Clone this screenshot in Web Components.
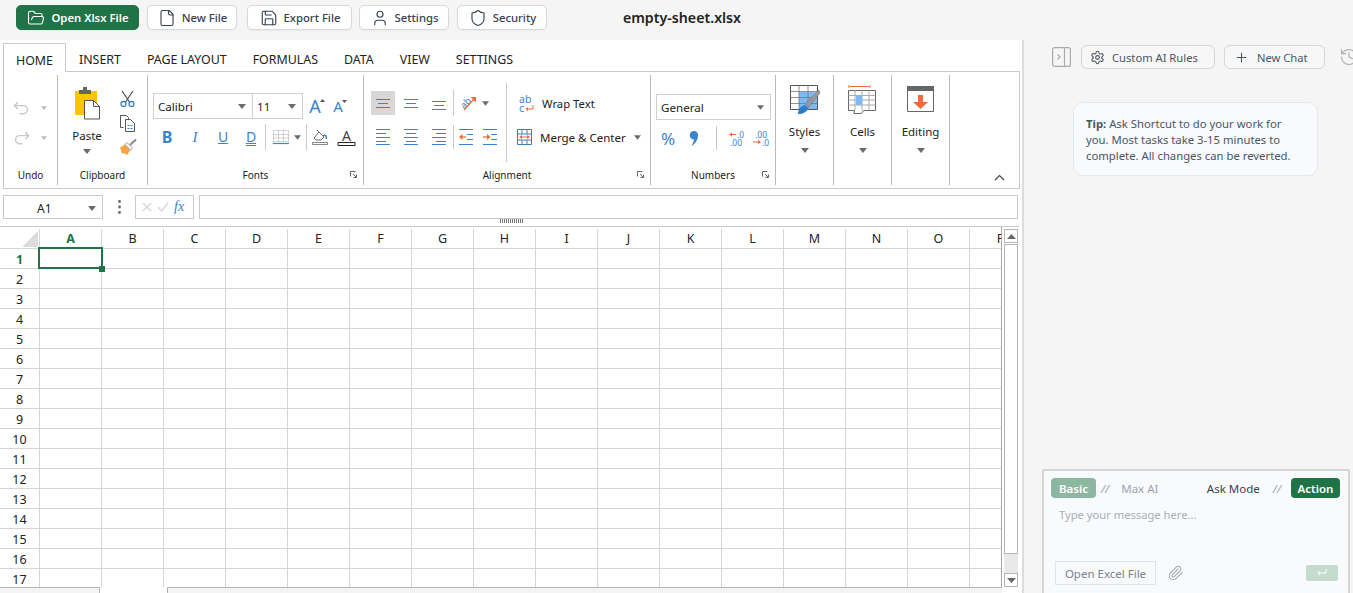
<!DOCTYPE html>
<html lang="en"><head><meta charset="utf-8"><title>empty-sheet.xlsx</title>
<style>
html,body{margin:0;padding:0;height:100%;overflow:hidden;background:#f5f5f5}
body{font-family:"Noto Sans","Open Sans","Liberation Sans",sans-serif;color:#222}
</style></head><body>
<app-shell></app-shell>
<script>
const lucide={
 folder:'<path d="m6 14 1.5-2.9A2 2 0 0 1 9.24 10H20a2 2 0 0 1 1.94 2.5l-1.54 6a2 2 0 0 1-1.95 1.5H4a2 2 0 0 1-2-2V5a2 2 0 0 1 2-2h3.9a2 2 0 0 1 1.69.9l.81 1.2a2 2 0 0 0 1.67.9H18a2 2 0 0 1 2 2v2"/>',
 file:'<path d="M15 2H6a2 2 0 0 0-2 2v16a2 2 0 0 0 2 2h12a2 2 0 0 0 2-2V7Z"/><path d="M14 2v4a2 2 0 0 0 2 2h4"/>',
 save:'<path d="M15.2 3a2 2 0 0 1 1.4.6l3.8 3.8a2 2 0 0 1 .6 1.4V19a2 2 0 0 1-2 2H5a2 2 0 0 1-2-2V5a2 2 0 0 1 2-2z"/><path d="M17 21v-7a1 1 0 0 0-1-1H8a1 1 0 0 0-1 1v7"/><path d="M7 3v4a1 1 0 0 0 1 1h7"/>',
 user:'<path d="M19 21v-2a4 4 0 0 0-4-4H9a4 4 0 0 0-4 4v2"/><circle cx="12" cy="7" r="4"/>',
 shield:'<path d="M20 13c0 5-3.5 7.5-7.66 8.95a1 1 0 0 1-.67-.01C7.5 20.5 4 18 4 13V6a1 1 0 0 1 1-1c2 0 4.5-1.2 6.24-2.72a1.17 1.17 0 0 1 1.52 0C14.51 3.81 17 5 19 5a1 1 0 0 1 1 1z"/>',
 gear:'<path d="M12.22 2h-.44a2 2 0 0 0-2 2v.18a2 2 0 0 1-1 1.73l-.43.25a2 2 0 0 1-2 0l-.15-.08a2 2 0 0 0-2.73.73l-.22.38a2 2 0 0 0 .73 2.73l.15.1a2 2 0 0 1 1 1.72v.51a2 2 0 0 1-1 1.74l-.15.09a2 2 0 0 0-.73 2.73l.22.38a2 2 0 0 0 2.73.73l.15-.08a2 2 0 0 1 2 0l.43.25a2 2 0 0 1 1 1.73V20a2 2 0 0 0 2 2h.44a2 2 0 0 0 2-2v-.18a2 2 0 0 1 1-1.73l.43-.25a2 2 0 0 1 2 0l.15.08a2 2 0 0 0 2.73-.73l.22-.39a2 2 0 0 0-.73-2.73l-.15-.08a2 2 0 0 1-1-1.74v-.5a2 2 0 0 1 1-1.74l.15-.09a2 2 0 0 0 .73-2.73l-.22-.38a2 2 0 0 0-2.73-.73l-.15.08a2 2 0 0 1-2 0l-.43-.25a2 2 0 0 1-1-1.73V4a2 2 0 0 0-2-2z"/><circle cx="12" cy="12" r="3"/>',
 plus:'<path d="M5 12h14M12 5v14"/>',
 history:'<path d="M3 12a9 9 0 1 0 9-9 9.75 9.75 0 0 0-6.74 2.74L3 8"/><path d="M3 3v5h5"/><path d="M12 7v5l4 2"/>',
 clip:'<path d="m21.44 11.05-9.19 9.19a6 6 0 0 1-8.49-8.49l8.57-8.57A4 4 0 1 1 18 8.84l-8.59 8.57a2 2 0 0 1-2.83-2.83l8.49-8.48"/>'
};
const lu=(n,s,c,w=2)=>`<svg width="${s}" height="${s}" viewBox="0 0 24 24" fill="none" stroke="${c}" stroke-width="${w}" stroke-linecap="round" stroke-linejoin="round">${lucide[n]}</svg>`;
class Base extends HTMLElement{
 constructor(){super();this.attachShadow({mode:'open'}).innerHTML=this.html();}
 html(){return ''}
}
const def=(n,c)=>customElements.define(n,c);

def('top-btn',class extends Base{
 html(){const p=this.hasAttribute('primary');const c=p?'#fff':'#374151';
  return `<style>:host{display:inline-flex;align-items:center;box-sizing:border-box;height:25px;border-radius:5px;flex:none;
   background:${p?'#1f7347':'#fff'};border:1px solid ${p?'#1f7347':'#d6d8df'};color:${p?'#fff':'#374151'};padding-left:1px;
   font:${p?600:500} 11.3px "Noto Sans",sans-serif;white-space:nowrap;justify-content:center;gap:6px;box-shadow:0 1px 1px rgba(0,0,0,.04)}
   svg{display:block;flex:none}</style>${lu(this.getAttribute('icon'),18,c,1.5)}<slot></slot>`}
});
def('top-bar',class extends Base{
 html(){return `<style>:host{display:flex;align-items:center;height:40px;box-sizing:border-box;padding:0 0 5px 16px;background:#f5f5f5}
  h1{margin:0 0 0 45px;width:180px;flex:none;text-align:center;font:600 14.2px "Noto Sans",sans-serif;color:#222;white-space:nowrap}</style>
  <top-btn primary icon="folder" style="width:123px">Open Xlsx File</top-btn>
  <top-btn icon="file" style="width:90px;margin-left:8px">New File</top-btn>
  <top-btn icon="save" style="width:105px;margin-left:10px">Export File</top-btn>
  <top-btn icon="user" style="width:90px;margin-left:7px">Settings</top-btn>
  <top-btn icon="shield" style="width:90px;margin-left:8px">Security</top-btn>
  <h1>empty-sheet.xlsx</h1>`}
});
def('ribbon-tabs',class extends Base{
 html(){const t=['INSERT','PAGE LAYOUT','FORMULAS','DATA','VIEW','SETTINGS'];
  return `<style>:host{display:flex;height:29px;margin:3px 2px 0 3px;box-sizing:border-box;border-bottom:1px solid #c9c9c9;font:12.4px "Noto Sans",sans-serif;color:#222}
  span{padding:0 13px;line-height:34px;white-space:nowrap}
  .on{background:#fff;border:1px solid #c9c9c9;border-bottom:0;height:29px;box-sizing:border-box;padding:0 12px;line-height:33px;width:63px;text-align:center}</style>
  <span class="on">HOME</span>${t.map(x=>`<span>${x}</span>`).join('')}`}
});
def('ribbon-group',class extends Base{
 html(){const l=this.getAttribute('label');const d=this.hasAttribute('launcher');
  return `<style>:host{display:grid;grid-template-rows:90px 20px;box-sizing:border-box;height:110px;margin-top:3px;border-right:1px solid #b9b9b9;flex:none;font:12px "Noto Sans",sans-serif;color:#222}
  .b{min-width:0}
  .l{display:flex;align-items:center;justify-content:center;position:relative;font-size:10px;color:#222}
  .d{position:absolute;right:6px;top:6px;width:7px;height:7px}</style>
  <div class="b"><slot></slot></div><div class="l">${l||''}${d?`<svg class="d" viewBox="0 0 7 7" fill="none" stroke="#666"><path d="M.5 5.5v-5h5"/><path d="M3 3l3 3M6.500 3.500v3h-3"/></svg>`:''}</div>`}
});
const caret=`<svg width="8" height="5" viewBox="0 0 8 5"><path d="M0 0h8L4 5z" fill="#6b6b6b"/></svg>`;
const B='#3a83cf',O='#f4683a',G='#666';
const alignIcon=(rows,h=16)=>`<svg width="14" height="${h}" viewBox="0 0 14 ${h}" stroke="${B}" stroke-width="1">${rows.map(r=>`<path d="M${r[0]} ${r[2]+.5}H${r[1]}"/>`).join('')}</svg>`;
def('ribbon-bar',class extends Base{
 html(){return `<style>
 :host{display:flex;height:117px;box-sizing:border-box;margin:0 2px 0 3px;border:solid #c9c9c9;border-width:0 1px 1px 1px;background:#fff;font:12px "Noto Sans",sans-serif;color:#222}
 svg{display:block;flex:none;overflow:visible}
 .rows{display:flex;flex-direction:column}
 .r{display:flex;align-items:center}
 .c{display:flex;align-items:center;justify-content:center;flex:none}
 .sep{width:1px;background:#c9c9c9;flex:none}
 .sel{display:flex;align-items:center;justify-content:space-between;box-sizing:border-box;border:1px solid #cfcfcf;height:26px;padding:0 6px 0 4px;font-size:11.6px;flex:none}
 .act{background:#d8d8d8}
 .big{display:flex;flex-direction:column;align-items:center}
 .big span{line-height:16px;margin-top:8px;font-size:11.5px}
 .big svg.k{margin-top:8px}
 .t{font-size:11.3px;white-space:nowrap}
 .blue{color:${B};font-size:15px;line-height:1}
 .last{flex:1;display:flex;justify-content:flex-end;align-items:flex-end;padding:0 14px 7px 0}
 </style>
 <ribbon-group label="Undo" style="width:54px">
  <div class="rows" style="padding:18px 0 0 9px">
   <div class="r" style="height:30px;gap:11px"><svg width="17" height="14" viewBox="0 0 18 14" fill="none" stroke="#c6c6c6" stroke-width="1.500"><path d="M5 1 1.500 4.500 5 8"/><path d="M2 4.500h9a4 4 0 0 1 0 8.500H7"/></svg><svg width="6" height="4" viewBox="0 0 8 5"><path d="M0 0h8L4 5z" fill="#bbb"/></svg></div>
   <div class="r" style="height:30px;gap:11px"><svg width="17" height="14" viewBox="0 0 18 14" fill="none" stroke="#c6c6c6" stroke-width="1.500"><path d="M13 1l3.500 3.500L13 8"/><path d="M16 4.500H7a4 4 0 0 0 0 8.500h3"/></svg><svg width="6" height="4" viewBox="0 0 8 5"><path d="M0 0h8L4 5z" fill="#bbb"/></svg></div>
  </div>
 </ribbon-group>
 <ribbon-group label="Clipboard" style="width:90px">
  <div class="r" style="align-items:flex-start;padding-top:12px">
   <div class="big" style="width:58px">
    <svg width="28" height="33" viewBox="0 0 28 33"><path d="M2 4h22v24H2z" fill="#fdc400"/><path d="M6 3h4V0h4v3h4v4H6z" fill="#666"/><path d="M11.500 13.500h9l6 6v12.500h-15z" fill="#fff" stroke="#555"/><path d="M20.500 13.500v6h6" fill="none" stroke="#555"/></svg>
    <span>Paste</span><svg width="8" height="5" viewBox="0 0 8 5" style="margin-top:5px"><path d="M0 0h8L4 5z" fill="#6b6b6b"/></svg>
   </div>
   <div class="rows" style="align-items:center;width:24px;margin-left:-1px">
    <div class="c" style="height:24px;width:24px"><svg width="15" height="16" viewBox="0 0 15 16" fill="none"><path d="M2 0l7.500 11M13 0 5.500 11" stroke="#555" stroke-width="1.300"/><circle cx="3.500" cy="13" r="2.500" stroke="${B}" stroke-width="1.300"/><circle cx="11.500" cy="13" r="2.500" stroke="${B}" stroke-width="1.300"/></svg></div>
    <div class="c" style="height:24px;width:24px"><svg width="15" height="17" viewBox="0 0 15 17" fill="none" stroke="#555"><path d="M3.500 12.500h-3V.5h6l2 2v2"/><path d="M5.500 4.500h5l4 4v8h-9z" fill="#fff"/><path d="M7.500 10.500h5M7.500 13.500h5" stroke="${B}" stroke-dasharray="2 1"/></svg></div>
    <div class="c" style="height:24px;width:24px;margin-left:3px"><svg width="17" height="16" viewBox="0 0 17 16"><path d="M0 8.500 5 5.500l5.500 5.500-3.500 5c-1.500-.5-2.500-1.300-3-2l-1.500 1C1.500 13.500 1 11 0 8.500z" fill="#f8a644"/><path d="M5 5.500l2-2 5.500 5.500-2 2z" fill="#fff" stroke="#888" stroke-width=".8"/><path d="M10 6l6-5.500" stroke="#888" stroke-width="2"/></svg></div>
   </div>
  </div>
 </ribbon-group>
 <ribbon-group label="Fonts" launcher style="width:216px">
  <div class="rows" style="padding:18px 0 0 5px">
   <div class="r" style="height:26px">
    <div class="sel" style="width:100px"><span>Calibri</span>${caret}</div>
    <div class="sel" style="width:51px;margin-left:-1px"><span>11</span>${caret}</div>
    <div class="c" style="width:16px;margin-left:4px"><span class="blue" style="font-size:18px;position:relative">A<svg style="position:absolute;right:-4px;top:2px" width="5" height="3" viewBox="0 0 5 3"><path d="M0 3 2.500 0 5 3z" fill="#555"/></svg></span></div>
    <div class="c" style="width:16px;margin-left:7px"><span class="blue" style="font-size:15px;position:relative">A<svg style="position:absolute;right:-4px;top:1px" width="5" height="3" viewBox="0 0 5 3"><path d="M0 0 2.500 3 5 0z" fill="#555"/></svg></span></div>
   </div>
   <div class="r" style="height:26px;margin-top:5px">
    <div class="c" style="width:28px"><span class="blue" style="font-weight:700;font-size:16px">B</span></div>
    <div class="c" style="width:28px"><span class="blue" style="font-style:italic;font-size:15px;font-family:'Liberation Serif',serif">I</span></div>
    <div class="c" style="width:28px"><span class="blue" style="text-decoration:underline;font-size:14px">U</span></div>
    <div class="c" style="width:28px"><span class="blue" style="text-decoration:underline double;font-size:14px">D</span></div>
    <div class="sep" style="height:26px"></div>
    <div class="c" style="margin-left:7px"><svg width="16" height="15" viewBox="0 0 16 15" fill="none"><path d="M.5.500h15v11H.5zM5.500.500v11M10.500.500v11M.5 4.500h15M.5 8h15" stroke="#aaa" stroke-dasharray="1 1"/><path d="M0 13.500h16" stroke="${B}" stroke-width="1.200"/></svg></div>
    <div class="c" style="margin-left:5px">${caret.replace('width="8"','width="7"')}</div>
    <div class="sep" style="height:26px;margin-left:5px"></div>
    <div class="c" style="margin-left:5px"><svg width="17" height="17" viewBox="0 0 17 17" fill="none"><path d="M2 9l5-6 5 5-3 3H4z" stroke="#666"/><path d="M5 1l3 3" stroke="#666"/><path d="M11 7c3-2 4 1 3 3" stroke="${B}" stroke-width="1.500"/><path d="M.5 13.500h15v2H.5z" stroke="#888" fill="#fff"/></svg></div>
    <div class="c" style="margin-left:9px;width:17px;flex-direction:column"><span style="font-size:14px;line-height:13px;color:#444">A</span><svg width="17" height="4" viewBox="0 0 17 4"><path d="M0 .5h17v3H0z" fill="#fff" stroke="#222"/></svg></div>
   </div>
  </div>
 </ribbon-group>
 <ribbon-group label="Alignment" launcher style="width:287px">
  <div class="r" style="align-items:flex-start;height:90px">
   <div class="rows" style="width:142px;flex:none;padding:16px 0 0 5px;box-sizing:border-box">
    <div class="r" style="height:24px">
     <div class="c" style="width:28px;height:24px"><div class="c act" style="width:24px;height:24px">${alignIcon([[0,14,0],[2,12,4],[0,14,8]],9)}</div></div>
     <div class="c" style="width:28px;height:24px">${alignIcon([[0,14,0],[2,12,4],[0,14,8]],9)}</div>
     <div class="c" style="width:28px;height:24px;padding-top:4px;box-sizing:border-box">${alignIcon([[0,14,0],[2,12,4],[0,14,8]],9)}</div>
     <div class="sep" style="height:26px"></div>
     <div class="c" style="margin-left:6px"><svg width="16" height="16" viewBox="0 0 16 16"><text x="0" y="11" font-size="9.500" fill="${B}" font-family="Noto Sans" transform="rotate(-45 6 8)">ab</text><path d="M4 15 14 4" stroke="${O}" stroke-width="1.200"/><path d="M10.500 2H16v5.500z" fill="${O}"/></svg></div>
     <div class="c" style="margin-left:6px">${caret.replace('width="8"','width="7"')}</div>
    </div>
    <div class="r" style="height:24px;margin-top:10px">
     <div class="c" style="width:28px">${alignIcon([[0,14,0],[0,10,4],[0,14,8],[0,10,12],[0,14,15]])}</div>
     <div class="c" style="width:28px">${alignIcon([[0,14,0],[2,12,4],[0,14,8],[2,12,12],[0,14,15]])}</div>
     <div class="c" style="width:28px">${alignIcon([[0,14,0],[4,14,4],[0,14,8],[4,14,12],[0,14,15]])}</div>
     <div class="sep" style="height:24px"></div>
     <div class="c" style="margin-left:5px"><svg width="15" height="16" viewBox="0 0 15 16" stroke="${B}"><path d="M0 .5h14M8 5.500h6M8 10.500h6M0 15.500h14"/><path d="M3 8h4" stroke="#f9a081" stroke-width="2"/><path d="M3.500 5 0 8l3.500 3z" fill="${O}" stroke="none"/></svg></div>
     <div class="c" style="margin-left:9px"><svg width="15" height="16" viewBox="0 0 15 16" stroke="${B}"><path d="M0 .5h14M8 5.500h6M8 10.500h6M0 15.500h14"/><path d="M0 8h4" stroke="#f9a081" stroke-width="2"/><path d="M4 5l3.500 3L4 11z" fill="${O}" stroke="none"/></svg></div>
    </div>
   </div>
   <div class="sep" style="height:79px;margin-top:8px"></div>
   <div class="rows" style="padding:16px 0 0 10px;box-sizing:border-box">
    <div class="r" style="height:24px;padding-left:2px;gap:8px"><svg width="15" height="17" viewBox="0 0 15 17"><text x="0" y="8" font-size="10.500" fill="${B}" font-family="Noto Sans">ab</text><text x="0" y="16.500" font-size="11" fill="${B}" font-family="Noto Sans">c</text><path d="M14 10v4H8" fill="none" stroke="${O}"/><path d="M9 12l-2.500 2L9 16z" fill="${O}"/></svg><span class="t">Wrap Text</span></div>
    <div class="r" style="height:24px;margin-top:10px;gap:8px"><svg width="15" height="16" viewBox="0 0 15 16" fill="none" stroke="#3a7cc0"><path d="M.5.500h14v15H.5zM.5 5h14M.5 11h14M5 .5V5M10 .5V5M5 11v4.500M10 11v4.500"/><path d="M3 8h9" stroke="${O}"/><path d="M5 6 2 8l3 2zM10 6l3 2-3 2z" fill="${O}" stroke="none"/></svg><span class="t" style="font-size:11.5px">Merge &amp; Center</span><span>${caret.replace('width="8"','width="7"')}</span></div>
   </div>
  </div>
 </ribbon-group>
 <ribbon-group label="Numbers" launcher style="width:125px">
  <div class="rows" style="padding:19px 0 0 5px">
   <div class="sel" style="width:115px;height:26px"><span>General</span>${caret.replace('width="8"','width="7"')}</div>
   <div class="r" style="height:26px;margin-top:5px">
    <div class="c" style="width:24px"><span class="blue" style="font-size:17px">%</span></div>
    <div class="c" style="width:10px;margin-left:9px"><svg width="8" height="15" viewBox="0 0 8 15"><path d="M4 0a4 4 0 0 1 4 4.500C8 9 5 13 1.500 15 3 12 4 10 4 8.500A4 4 0 0 1 4 0z" fill="${B}"/></svg></div>
    <div class="sep" style="height:24px;margin-left:17px"></div>
    <div class="c" style="margin-left:12px"><svg width="17" height="15" viewBox="0 0 17 15"><text x="8" y="6.500" font-size="8.500" fill="${B}" font-family="Noto Sans">.0</text><text x="1" y="14.500" font-size="8.500" fill="${B}" font-family="Noto Sans">.00</text><path d="M7 3.500H1" stroke="${O}"/><path d="M3 1.500 0 3.500l3 2z" fill="${O}"/></svg></div>
    <div class="c" style="margin-left:7px"><svg width="17" height="15" viewBox="0 0 17 15"><text x="2" y="6.500" font-size="8.500" fill="${B}" font-family="Noto Sans">.00</text><text x="9" y="14.500" font-size="8.500" fill="${B}" font-family="Noto Sans">.0</text><path d="M0 11h6" stroke="${O}"/><path d="M5 9l3 2-3 2z" fill="${O}"/></svg></div>
   </div>
  </div>
 </ribbon-group>
 <ribbon-group style="width:58px"><div class="big" style="padding:10px 0 0 0">
   <svg width="30" height="30" viewBox="0 0 30 30"><path d="M.5.500h27v24H.5z" fill="#fff" stroke="#555"/><path d="M9 7h18v17H9z" fill="#7db9f5"/><path d="M.5 6.500h27M.5 12.500h27M.5 18.500h27M9 .5v24M18 .5v24" stroke="#777" fill="none" stroke-width=".8"/><path d="M29 5 15 19l4 3L30 8z" fill="#999" stroke="#777" stroke-width=".6"/><path d="M8 29c0-5 3-8 7-9l3 3c-1 4-5 6-10 6z" fill="#2d7cc9"/></svg>
   <span style="margin-top:9px">Styles</span>${caret.replace('<svg','<svg class="k"')}
 </div></ribbon-group>
 <ribbon-group style="width:58px"><div class="big" style="padding:10px 0 0 0">
   <svg width="30" height="30" viewBox="0 0 30 30" fill="none"><path d="M1 0v3M22 0v3M2 1.500h19" stroke="${O}"/><path d="M.5 5.500h27v20h-12l-2 3H6l.5-3h-6z" fill="#fff" stroke="#666"/><path d="M.5 10.500h27M.5 15h27M.5 20h27M7 5.500v20M14 5.500v20M21 5.500v20" stroke="#aaa"/><path d="M8 10h6v10H8z" fill="#7db9f5"/></svg>
   <span style="margin-top:9px">Cells</span>${caret.replace('<svg','<svg class="k"')}
 </div></ribbon-group>
 <ribbon-group style="width:58px"><div class="big" style="padding:11px 0 0 0">
   <svg width="27" height="29" viewBox="0 0 27 29"><path d="M.5.500h26v25H.5z" fill="#fff" stroke="#666"/><path d="M0 0h27v5H0z" fill="#666"/><path d="M11 9h5v7h5l-7.500 7L6 16h5z" fill="${O}"/></svg>
   <span style="margin-top:9px">Editing</span>${caret.replace('<svg','<svg class="k"')}
 </div></ribbon-group>
 <div class="last"><svg width="11" height="7" viewBox="0 0 11 7" fill="none" stroke="#444" stroke-width="1.200"><path d="M1 6l4.500-4.500L10 6"/></svg></div>`}
});
def('formula-bar',class extends Base{
 html(){return `<style>:host{display:flex;height:24px;margin:6px 4px 0 3px;font:12px "Noto Sans",sans-serif;color:#222}
 .b{box-sizing:border-box;border:1px solid #c9c9c9;height:24px;display:flex;align-items:center;flex:none}
 svg{display:block}
 .fx{font:italic 14px "Liberation Serif",serif;color:${B}}</style>
 <div class="b" style="width:100px;padding:2px 6px 0 33px;justify-content:space-between"><span>A1</span>${caret}</div>
 <div style="width:32px;display:flex;align-items:center;justify-content:center;flex:none"><svg width="3" height="14" viewBox="0 0 3 14" fill="#666"><circle cx="1.500" cy="1.500" r="1.400"/><circle cx="1.500" cy="7" r="1.400"/><circle cx="1.500" cy="12.500" r="1.400"/></svg></div>
 <div class="b" style="width:59px;gap:5px;padding-left:6px"><svg width="10" height="10" viewBox="0 0 10 10" stroke="#d4d4d4" stroke-width="1.300"><path d="M1 1l8 8M9 1 1 9"/></svg><svg width="12" height="10" viewBox="0 0 12 10" fill="none" stroke="#d4d4d4" stroke-width="1.300"><path d="M1 5l3.500 4L11 1"/></svg><span class="fx">fx</span></div>
 <div class="b" style="flex:1;margin-left:5px"></div>`}
});
def('sheet-grid',class extends Base{
 html(){
  const cols='ABCDEFGHIJKLMNOP'.split('');
  let h=`<div class="h corner"><svg width="16" height="16" viewBox="0 0 16 16"><path d="M16 0v16H0z" fill="#dcdcdc"/></svg></div>`;
  cols.forEach((c,i)=>h+=`<div class="h col${i==0?' on':''}">${c}</div>`);
  for(let r=1;r<=17;r++){
   h+=`<div class="h rowh${r==1?' on':''}">${r}</div>`;
   cols.forEach((c,i)=>h+=`<div class="cell">${r==1&&i==0?'<i class="sel"></i><i class="hd"></i>':''}</div>`);
  }
  return `<style>:host{display:block;flex:1;min-width:0;overflow:hidden;background:#fff;font:12.5px "Noto Sans",sans-serif;color:#222}
  .g{display:grid;grid-template-columns:40px repeat(16,62px);grid-auto-rows:20px;padding-top:2px;width:1032px}
  .g>div{box-sizing:border-box;border-right:1px solid #d6d6d6;border-bottom:1px solid #d6d6d6}
  .h{display:flex;align-items:center;justify-content:center;color:#222}
  .corner{justify-content:flex-end;padding-right:1px;align-items:flex-end;padding-bottom:1px}
  .on{color:#1f7347;font-weight:700}
  .rowh{padding-top:2px}
  .cell{position:relative}
  .sel{position:absolute;left:-2px;top:-2px;width:65px;height:22px;box-sizing:border-box;border:2px solid #1f7347;z-index:1}
  .hd{position:absolute;right:-4px;bottom:-4px;width:6px;height:6px;background:#1f7347;z-index:2}
  </style><div class="g">${h}</div>`}
});
def('sheet-scroll',class extends Base{
 html(){return `<style>:host{display:flex;flex-direction:column;width:18px;box-sizing:border-box;flex:none;padding:2px 1px 0 2px;background:#fff;border-left:1px solid #a8a8a8}
 .b{height:14px;box-sizing:border-box;border:1px solid #b5b5b5;background:#fff;display:flex;align-items:center;justify-content:center;flex:none}
 .th{height:310px;box-sizing:border-box;border:1px solid #b5b5b5;background:#fff;flex:none;margin-top:1px}
 .tr{flex:1;background:#e9e9e9}</style>
 <div class="b"><svg width="9" height="5" viewBox="0 0 9 5"><path d="M0 5h9L4.500 0z" fill="#666"/></svg></div>
 <div class="th"></div><div class="tr"></div>
 <div class="b"><svg width="9" height="5" viewBox="0 0 9 5"><path d="M0 0h9L4.500 5z" fill="#666"/></svg></div>`}
});
def('sheet-foot',class extends Base{
 html(){return `<style>:host{display:flex;height:6px;box-sizing:border-box;background:#fff}
 .a{background:#f4f4f4;border-top:1px solid #b5b5b5;box-sizing:border-box;height:6px}</style>
 <div class="a" style="width:100px;border-right:1px solid #b5b5b5"></div><div style="width:67px"></div><div class="a" style="width:835px;border-left:1px solid #b5b5b5"></div>`}
});
def('sheet-pane',class extends Base{
 html(){return `<style>:host{display:flex;flex-direction:column;width:1022px;flex:none;background:#fff;border-right:2px solid #dcdcdc;box-sizing:content-box;overflow:hidden}
 .sp{height:7px;display:flex;justify-content:center;flex:none;padding-left:1px}
 .sp i{display:block;width:24px;height:4px;background:repeating-linear-gradient(90deg,#777 0 1px,transparent 1px 2px),#fff}
 .m{display:flex;flex:none;height:360px;border-top:1px solid #c9c9c9;margin-right:3px}</style>
 <ribbon-tabs></ribbon-tabs><ribbon-bar></ribbon-bar><formula-bar></formula-bar>
 <div class="sp"><i></i></div>
 <div class="m"><sheet-grid></sheet-grid><sheet-scroll></sheet-scroll></div>
 <sheet-foot></sheet-foot>`}
});
def('chat-btn',class extends Base{
 html(){return `<style>:host{display:inline-flex;align-items:center;justify-content:flex-start;gap:7px;padding-left:8px;box-sizing:border-box;height:24px;border:1px solid #d4d6dc;border-radius:6px;background:#f7f7f8;font:11.2px "Noto Sans",sans-serif;color:#4b5563;white-space:nowrap;flex:none}svg{display:block}</style>${lu(this.getAttribute('icon'),15,'#4b5563',1.7)}<slot></slot>`}
});
def('chat-input',class extends Base{
 html(){return `<style>:host{display:flex;flex-direction:column;box-sizing:border-box;width:308px;height:124px;border:2px solid #d6d6d6;border-bottom:0;background:#f9fafb;padding:7px 7px 0 7px;font:11.5px "Noto Sans",sans-serif;color:#374151;flex:none}
 .top{display:flex;align-items:center;height:20px}
 .p{box-sizing:border-box;height:20px;border-radius:4px;display:flex;align-items:center;justify-content:center;color:#fff;font-weight:600}
 .s{color:#9ca3af;font-style:italic}
 .ph{margin:9px 0 0 8px;color:#a9afb8;height:54px;line-height:16px;font-size:11.2px}
 .bot{display:flex;align-items:center;padding-left:4px;height:24px}
 .oe{box-sizing:border-box;width:101px;height:24px;border:1px solid #e2e4e8;display:flex;align-items:center;justify-content:center;color:#7b828e;font-size:11.5px}
 .send{box-sizing:border-box;width:32px;height:16px;background:#c4dccf;border-radius:2px;margin-left:auto;margin-right:3px;display:flex;align-items:center;justify-content:center}
 svg{display:block}</style>
 <div class="top"><div class="p" style="width:45px;background:#8cb8a2">Basic</div><span class="s" style="margin-left:5px">//</span><span style="margin-left:12px;color:#9ca3af">Max AI</span>
  <span style="margin-left:auto;color:#374151">Ask Mode</span><span class="s" style="margin-left:13px">//</span><div class="p" style="width:49px;background:#1f7347;margin-left:10px;margin-right:1px">Action</div></div>
 <div class="ph">Type your message here...</div>
 <div class="bot"><div class="oe">Open Excel File</div><span style="margin-left:12px">${lu('clip',16,'#a3a8b0',1.6)}</span><div class="send"><svg width="10" height="8" viewBox="0 0 10 8" fill="none" stroke="#fff"><path d="M9 0v4H1"/><path d="M3 2 1 4l2 2"/></svg></div></div>`}
});
def('chat-pane',class extends Base{
 html(){return `<style>:host{display:flex;flex-direction:column;flex:1;min-width:0;background:#f5f5f5;overflow:hidden;font:11.5px "Noto Sans",sans-serif}
 .hd{display:flex;align-items:center;height:24px;margin-top:5px;padding-left:28px;gap:9px;width:360px}
 .tip{box-sizing:border-box;width:245px;height:74px;margin:33px 0 0 49px;border:1px solid #e7e8ec;border-radius:10px;background:#f9fafb;padding:13px 24px 0 12px;line-height:16px;color:#4b5563;font-size:11.3px}
 b{color:#4b5563}
 svg{display:block}
 .ci{margin:auto 0 0 18px}</style>
 <div class="hd"><svg width="19" height="20" viewBox="0 0 19 20" fill="none" stroke="#aaa" stroke-width="1.200" style="margin-right:1px"><rect x=".6" y=".6" width="17.800" height="18.800" rx="2"/><path d="M12.500 .6v18.800"/><path d="M5.500 7.500 8 10l-2.500 2.500"/></svg>
  <chat-btn icon="gear" style="width:134px">Custom AI Rules</chat-btn><chat-btn icon="plus" style="width:101px;padding-left:9px;gap:8px">New Chat</chat-btn><span style="margin-left:5px">${lu('history',20,'#b3b3b3',1.5)}</span></div>
 <div class="tip"><b>Tip:</b> Ask Shortcut to do your work for you. Most tasks take 3-15 minutes to complete. All changes can be reverted.</div>
 <chat-input class="ci"></chat-input>`}
});
def('app-shell',class extends Base{
 html(){return `<style>:host{display:flex;flex-direction:column;width:1353px;height:593px;overflow:hidden;background:#f5f5f5}
 .m{display:flex;flex:1;min-height:0}</style><top-bar></top-bar><div class="m"><sheet-pane></sheet-pane><chat-pane></chat-pane></div>`}
});
</script></body></html>
